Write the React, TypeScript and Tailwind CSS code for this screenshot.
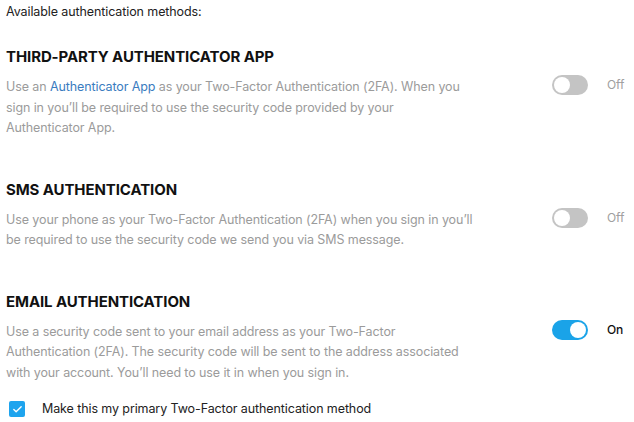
import { Check } from "lucide-react";

type Method = {
  title: string;
  body: React.ReactNode;
  on: boolean;
};

const methods: Method[] = [
  {
    title: "THIRD-PARTY AUTHENTICATOR APP",
    body: (
      <>
        Use an <a className="text-[#3a7cc0]" href="#">Authenticator App</a> as your Two-Factor Authentication (2FA). When you
        sign in you’ll be required to use the security code provided by your Authenticator App.
      </>
    ),
    on: false,
  },
  {
    title: "SMS AUTHENTICATION",
    body: "Use your phone as your Two-Factor Authentication (2FA) when you sign in you’ll be required to use the security code we send you via SMS message.",
    on: false,
  },
  {
    title: "EMAIL AUTHENTICATION",
    body: "Use a security code sent to your email address as your Two-Factor Authentication (2FA). The security code will be sent to the address associated with your account. You’ll need to use it in when you sign in.",
    on: true,
  },
];

function Toggle({ on }: { on: boolean }) {
  return (
    <div className="flex items-center">
      <span
        className={
          on
            ? "flex h-[20px] w-[36px] items-center justify-end rounded-full bg-[#1aa3e8] px-[2px]"
            : "flex h-[20px] w-[36px] items-center justify-start rounded-full bg-[#c4c4c4] px-[2px]"
        }
      >
        <span className="h-[16px] w-[16px] rounded-full bg-white" />
      </span>
      <span className={on ? "ml-[19px] text-[12px] font-medium text-[#111]" : "ml-[19px] text-[12px] text-[#a0a0a0]"}>
        {on ? "On" : "Off"}
      </span>
    </div>
  );
}

export default function App() {
  return (
    <div className="h-[422px] w-[634px] overflow-hidden bg-white px-[6px] pt-[2px] font-['Inter',sans-serif] text-[12.5px] tracking-[-0.1px]">
      <p className="leading-[20px] text-[#222]">Available authentication methods:</p>
      <div className="mt-[25px] grid gap-[41px]">
        {methods.map((m) => (
          <section key={m.title}>
            <h2 className="text-[15px] font-bold leading-[20px] tracking-[-0.1px] text-[#111]">{m.title}</h2>
            <div className="mt-[10px] flex items-start justify-between">
              <p className="w-[468px] leading-[20.5px] text-[#9b9b9b]">{m.body}</p>
              <div className="mr-[3px] mt-[-2px] w-[73px]">
                <Toggle on={m.on} />
              </div>
            </div>
          </section>
        ))}
      </div>
      <label className="mt-[17px] flex items-center">
        <span className="ml-[3px] flex h-[16px] w-[16px] items-center justify-center rounded-[2px] bg-[#1ea4ee]">
          <Check className="h-[11px] w-[11px] text-white" strokeWidth={3} />
        </span>
        <span className="ml-[17px] text-[#222]">Make this my primary Two-Factor authentication method</span>
      </label>
    </div>
  );
}
